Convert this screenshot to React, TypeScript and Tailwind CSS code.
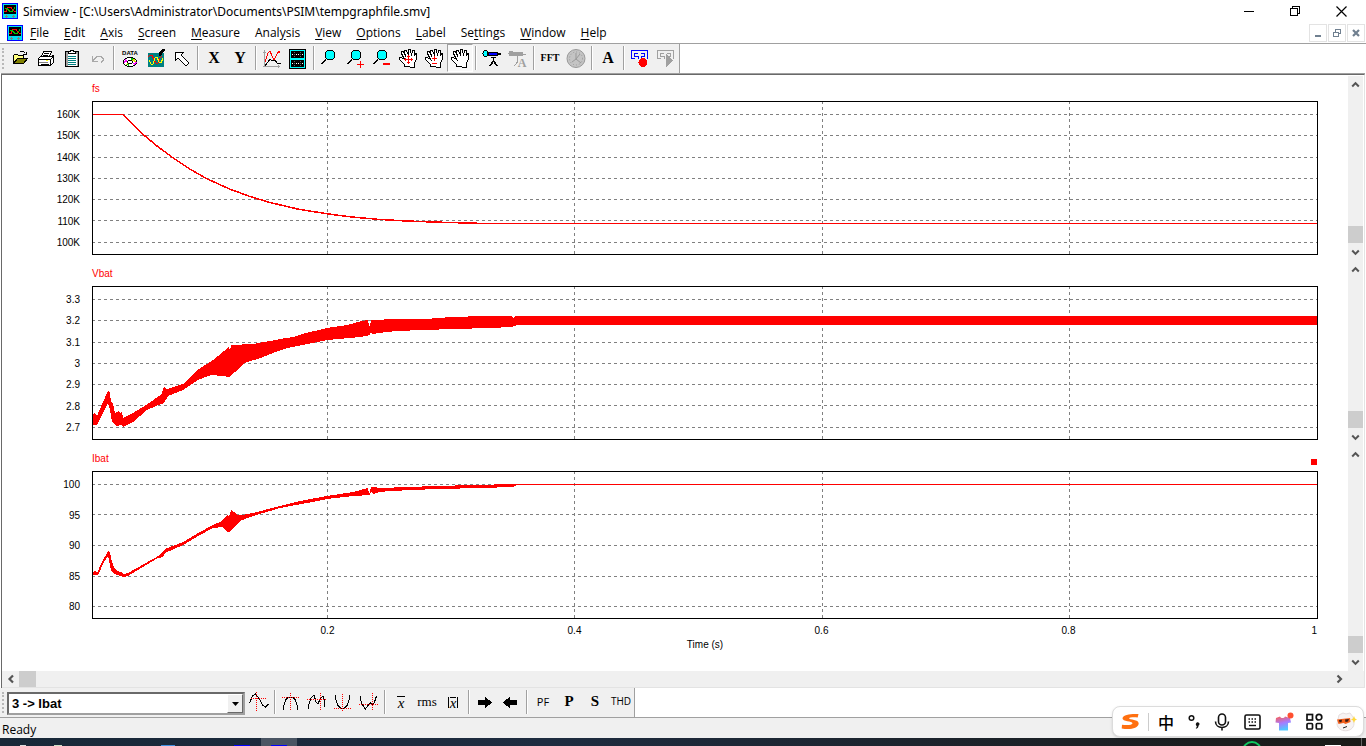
import type { ReactNode } from "react";

type Pt = [number, number];

const PLOT_LEFT = 92;
const PLOT_W = 1226;
const V_LINES = [327, 574, 822, 1069];

const fsCurve: Pt[] = [
  [92, 114], [123, 114], [142, 133], [157, 145.5], [173, 157.3], [190, 168.6], [207, 178.3], [230, 188.7],
  [250, 196], [270, 202], [298, 208.6], [327, 213.3], [352, 216.5], [380, 219], [405, 220.4], [430, 221.4],
  [460, 222.3], [487, 223],
];

const vbatShape: Pt[] = [
  [92, 414], [95, 413], [97, 416], [102, 404], [108, 391], [110, 393], [111, 402], [113, 404], [115, 413],
  [117, 412], [119, 411], [120, 413], [122, 412], [123, 418], [133, 413], [146, 405], [162, 394], [163, 388],
  [164, 387], [167, 389], [183, 384], [199, 369], [213, 360], [229, 347], [230, 351], [231, 345], [253, 344],
  [270, 341], [280, 339], [293, 337], [302, 334], [327, 328], [347, 325], [362, 321], [368, 320], [369, 326],
  [370, 326], [371, 320], [397, 319], [430, 319], [433, 318], [457, 317], [478, 316], [512, 316], [513, 318],
  [516, 316], [1317, 316], [1317, 325], [517, 325], [512, 327], [490, 328], [454, 329], [423, 330], [397, 331],
  [387, 332], [372, 334], [371, 331], [370, 335], [360, 337], [327, 340], [303, 345], [287, 348], [273, 353],
  [263, 357], [245, 363], [235, 372], [229, 377], [223, 376], [211, 375], [198, 380], [183, 390], [168, 396],
  [164, 403], [161, 404], [147, 410], [133, 422], [123, 427], [121, 425], [117, 426], [112, 422], [110, 410],
  [108, 403], [102, 415], [97, 425], [92, 425],
];

const ibatShape: Pt[] = [
  [92, 572], [95, 571], [97, 573], [101, 564], [108, 551], [110, 552], [111, 558], [114, 568], [117, 571],
  [121, 572], [123, 574], [128, 573], [160, 555], [163, 551], [165, 549], [183, 542], [200, 532], [213, 525],
  [222, 521], [228, 514], [229, 517], [231, 510], [234, 512], [237, 515], [242, 515], [253, 513], [280, 506],
  [300, 501], [327, 496], [340, 494], [353, 492], [368, 488], [369, 493], [370, 492], [371, 487], [374, 487],
  [380, 488], [407, 487], [437, 486], [472, 485], [517, 484], [1317, 484], [1317, 485], [517, 485], [513, 487],
  [482, 488], [437, 489], [390, 491], [380, 492], [373, 494], [371, 492], [370, 495], [353, 496], [327, 499],
  [307, 503], [280, 508], [253, 516], [240, 521], [230, 532], [228, 532], [222, 527], [213, 528], [200, 535],
  [183, 545], [165, 553], [163, 557], [158, 558], [128, 576], [123, 577], [120, 576], [114, 574], [111, 570],
  [108, 556], [104, 562], [98, 575], [92, 575],
];

const toPoints = (pts: Pt[], top: number) => pts.map(([x, y]) => `${x - PLOT_LEFT},${y - top}`).join(" ");

interface PanelProps {
  title: string;
  top: number;
  height: number;
  ticks: string[];
  lines: number[];
  children: ReactNode;
  selected?: boolean;
  axis?: boolean;
}

function Arrow({ dir }: { dir: "up" | "down" | "left" | "right" }) {
  const d = {
    up: "M4.500 9.500 8 6l3.500 3.500",
    down: "M4.500 6.500 8 10l3.500-3.500",
    left: "M10 4.500 6.500 8l3.500 3.500",
    right: "M6.500 4.500 10 8l-3.500 3.500",
  }[dir];
  return (
    <svg className="h-4 w-4" viewBox="0 0 16 16" aria-hidden="true">
      <path d={d} fill="none" stroke="#555" strokeWidth="2.2" />
    </svg>
  );
}

function VScroll() {
  return (
    <div className="flex w-[15px] shrink-0 flex-col items-center bg-[#f0f0f0]">
      <button aria-label="Scroll up" className="flex h-[17px] w-full items-center justify-center">
        <Arrow dir="up" />
      </button>
      <div className="flex-1" />
      <div className="h-[17px] w-full bg-[#cdcdcd]" />
      <button aria-label="Scroll down" className="flex h-[18px] w-full items-center justify-center">
        <Arrow dir="down" />
      </button>
    </div>
  );
}

function Panel({ title, top, height, ticks, lines, children, selected, axis }: PanelProps) {
  return (
    <section className={axis ? "flex flex-1" : "flex"}>
      <div className="flex w-[90px] shrink-0 flex-col pt-[25px] pr-3">
        <div className={`flex flex-col justify-between pt-2 pb-1.5 text-right leading-3 ${axis ? "h-[148px]" : "h-[154px]"}`}>
          {ticks.map((t) => (
            <span key={t}>{t}</span>
          ))}
        </div>
      </div>
      <div className={axis ? "min-w-0 flex-1" : "min-w-0 flex-1 pb-1.5"}>
        <div className="flex h-[25px] justify-between leading-[25px] text-[#ff0000]">
          <h2>{title}</h2>
          {selected && <span className="mr-px mb-1.5 h-1.5 w-1.5 self-end bg-[#ff0000]" />}
        </div>
        <svg
          className={`block w-full ${axis ? "h-[148px]" : "h-[154px]"}`}
          viewBox={`0 0 ${PLOT_W} ${height}`}
          preserveAspectRatio="none"
          shapeRendering="crispEdges"
          role="img"
          aria-label={title}
        >
          <g stroke="#808080" strokeDasharray="3 3">
            {lines.map((y) => (
              <line key={y} x1="0" x2={PLOT_W} y1={y - top + 0.5} y2={y - top + 0.5} />
            ))}
            {V_LINES.map((x) => (
              <line key={x} y1="0" y2={height} x1={x - PLOT_LEFT + 0.5} x2={x - PLOT_LEFT + 0.5} />
            ))}
          </g>
          {children}
          <rect x="0.5" y="0.5" width={PLOT_W - 1} height={height - 1} fill="none" stroke="#000" />
        </svg>
        {axis && (
          <div className="pt-[5px] text-center leading-[14px]">
            <div className="grid grid-cols-[112fr_247fr_247fr_247fr_247fr_126fr]">
              <span />
              <span>0.2</span>
              <span>0.4</span>
              <span>0.6</span>
              <span>0.8</span>
              <span className="pr-px text-right">1</span>
            </div>
            <div>Time (s)</div>
          </div>
        )}
      </div>
      <div className="w-[30px] shrink-0" />
      <VScroll />
    </section>
  );
}

function AppIcon() {
  return (
    <svg className="h-4 w-4 shrink-0" viewBox="0 0 16 16" shapeRendering="crispEdges" aria-hidden="true">
      <rect width="16" height="16" fill="#0000ff" />
      <rect x="1" y="1" width="14" height="14" fill="#00e0f0" />
      <rect x="2" y="2" width="12" height="9" fill="#000" />
      <path d="M2 8.500h2l2-4h3l2 3 2 1h1" fill="none" stroke="#ff0000" />
      <path d="M3 5.500h2l3 3h2l3-4" fill="none" stroke="#00c000" />
      <path d="M3 13.500h3M4.500 12v3M10 13.500h3M11.500 12v3" stroke="#808080" />
    </svg>
  );
}

function Ico({ children, crisp = true }: { children: ReactNode; crisp?: boolean }) {
  return (
    <svg className="h-7 w-[26px] shrink-0" viewBox="0 0 26 28" fill="none" stroke="#000" shapeRendering={crisp ? "crispEdges" : "auto"} aria-hidden="true">
      {children}
    </svg>
  );
}

function Tool({ label, children, pressed }: { label: string; children: ReactNode; pressed?: boolean }) {
  return (
    <button
      aria-label={label}
      className={`flex h-7 w-[26px] shrink-0 items-center justify-center ${
        pressed ? "border border-t-[#a0a0a0] border-r-white border-b-white border-l-[#a0a0a0] bg-[#f8f8f8]" : ""
      }`}
    >
      {children}
    </button>
  );
}

function Sep() {
  return (
    <div className="flex h-7 w-1.5 shrink-0 justify-center py-0.5">
      <div className="w-0.5 border-r border-l border-r-white border-l-[#a0a0a0]" />
    </div>
  );
}

function Grip() {
  return <div className="mx-0.5 my-1 w-[3px] shrink-0 border-l-2 border-dotted border-[#b8b8b8]" />;
}

function Lens() {
  return (
    <>
      <path d="M9 15.500 4.500 20" strokeWidth="2" />
      <circle cx="13" cy="11" r="5" fill="#00ffff" />
    </>
  );
}

function Hand() {
  return (
    <path
      d="M9.500 22.500v-2l-5-5v-2h2l3 2-3-6v-2h2l2 5-1-5v-1h2l2 5v-6h2l1 6 1-5h2v5l1-2h1v5l-2 5v4z"
      fill="#fff"
    />
  );
}

function Recorder({ color }: { color: string }) {
  return <path d="M4.500 15v-8.500h16v8.500M4 14.500h4M11 9.500h-3.500v3h3.500M14 9.500h3.500v3h-3.500M11 12v3M14 12v3" stroke={color} />;
}

function MainToolbar() {
  return (
    <div className="flex bg-white">
      <div className="flex h-[29px] border-r border-[#a0a0a0] bg-[#f0f0f0]" role="toolbar" aria-label="Main">
        <Grip />
        <Tool label="Open">
          <Ico>
            <path d="M6.500 19.500v-8l1-1h3l1 1h5v3" fill="#ffff80" />
            <path d="M6.500 19.500l4-5h10l-4 5z" fill="#808000" />
            <path d="M12.500 8.500l1-1h3l2 2M16 10.500h3.500v-3" />
          </Ico>
        </Tool>
        <Tool label="Print">
          <Ico>
            <path d="M8.500 12.500l2-5h8l-2 5" fill="#fff" />
            <path d="M11 9.500h5M10 11.500h5" />
            <path d="M5.500 14.500l2-2h11l2-1v7l-3 3h-12z" fill="#fff" />
            <path d="M5.500 15.500h12v6M17.500 15.500l3-3" />
            <path d="M6 18.500h9" stroke="#808080" />
            <rect x="13" y="16" width="2" height="1" fill="#ffff00" stroke="none" />
            <path d="M8 20.500h8" />
          </Ico>
        </Tool>
        <Tool label="Copy">
          <Ico>
            <rect x="6.500" y="7.500" width="13" height="15" fill="#a0a0a0" />
            <rect x="8.500" y="9.500" width="9" height="12" fill="#fff" stroke="none" />
            <path d="M9 12.500h8M9 14.500h8M9 16.500h8M9 18.500h8M9 20.500h8" stroke="#008080" />
            <path d="M9.500 9.500v-2h2v-1h3v1h2v2z" fill="#fff" />
          </Ico>
        </Tool>
        <Tool label="Undo">
          <Ico>
            <path d="M7.500 12v5.500h5M8 16.500l4-4h4l2 2v2l-2 2" stroke="#a8a8a8" />
          </Ico>
        </Tool>
        <Sep />
        <Tool label="Data">
          <Ico>
            <text x="13" y="11" fontSize="6" fontWeight="bold" textAnchor="middle" fill="#000" stroke="none" fontFamily="Liberation Sans, sans-serif">
              DATA
            </text>
            <ellipse cx="13" cy="18" rx="7" ry="4.500" fill="#fff" />
            <path d="M8 15l3 2.500-4 1.500zM18 21l-3-2 5-1z" fill="#ff00ff" stroke="none" />
            <path d="M17 14.500l-2 2.500 4 1zM8 21l3-2.500 1 3z" fill="#e0e000" stroke="none" />
            <path d="M14 14l0 3 3-2zM12 22v-3l-3 2z" fill="#00c000" stroke="none" />
            <ellipse cx="13" cy="18" rx="2.500" ry="1.500" fill="#fff" />
          </Ico>
        </Tool>
        <Tool label="Colors">
          <Ico>
            <rect x="5" y="9" width="16" height="14" fill="#008080" stroke="none" />
            <path d="M5 13l2-2h2l2 5 2 3h2l2-5 2-2" stroke="#ff0000" />
            <path d="M6 16l2 4h2l2-6 2-1 2 5 2 1 2-5" stroke="#ffff00" />
            <path d="M21.500 5l-5 7M20.500 5l-4 5" strokeWidth="2" />
          </Ico>
        </Tool>
        <Tool label="Select">
          <Ico>
            <path d="M6.500 8.500h8l-2.500 2.500 8 8-3 3-8-8-2.500 2.500z" fill="#fff" />
          </Ico>
        </Tool>
        <Sep />
        <Tool label="X axis">
          <span className="font-['Liberation_Serif',serif] text-base font-bold">X</span>
        </Tool>
        <Tool label="Y axis">
          <span className="font-['Liberation_Serif',serif] text-base font-bold">Y</span>
        </Tool>
        <Sep />
        <Tool label="Add curves">
          <Ico>
            <path d="M5.500 23V6M4 8.500h3M4 22.500h17M19.500 21v3" stroke="#a0a0a0" />
            <path d="M6 18l3-9 2-2 2 5 2 4 2-4 3-5 1 2" stroke="#ff0000" />
            <path d="M6 22l3-4 2-3 2 2 3-1 2 3h4" />
          </Ico>
        </Tool>
        <Tool label="Add screen">
          <Ico>
            <rect x="4" y="5" width="17" height="20" fill="#000" stroke="none" />
            <rect x="5.500" y="6.500" width="14" height="8" stroke="#00ffff" />
            <rect x="5.500" y="15.500" width="14" height="8" stroke="#00ffff" />
            <path d="M7 10.500h11M7 19.500h11" stroke="#fff" strokeDasharray="1 1" shapeRendering="auto" />
            <path d="M9.500 8v5M15.500 8v5M9.500 17v5M15.500 17v5" stroke="#606060" strokeDasharray="1 1" shapeRendering="auto" />
          </Ico>
        </Tool>
        <Sep />
        <Tool label="Zoom">
          <Ico>
            <Lens />
          </Ico>
        </Tool>
        <Tool label="Zoom in">
          <Ico>
            <Lens />
            <path d="M14 20.500h7M17.500 17v7" stroke="#ff0000" />
          </Ico>
        </Tool>
        <Tool label="Zoom out">
          <Ico>
            <Lens />
            <path d="M14 20h7" stroke="#ff0000" strokeWidth="2" />
          </Ico>
        </Tool>
        <Tool label="Pan all">
          <Ico>
            <Hand />
            <path d="M9 15.500h9M13.500 11v9M10.500 14v3M16.500 14v3M12 12.500h3M12 18.500h3" stroke="#ff0000" />
          </Ico>
        </Tool>
        <Tool label="Pan vertical">
          <Ico>
            <Hand />
            <path d="M13.500 12v5M11 14.500h5M11 19.500h5" stroke="#ff0000" />
          </Ico>
        </Tool>
        <Tool label="Pan" pressed>
          <Ico>
            <Hand />
          </Ico>
        </Tool>
        <Sep />
        <Tool label="Measure">
          <Ico>
            <path d="M14.500 14v4M14.500 17l-4 5.500M14.500 17l4 5.500" strokeWidth="1.500" />
            <rect x="9.500" y="8.500" width="9" height="3" fill="#0000ff" />
            <rect x="18" y="9" width="4" height="2" fill="#000" stroke="none" />
            <ellipse cx="6.500" cy="9.500" rx="2.500" ry="3" fill="#00ffff" />
            <path d="M12 13.500h5" />
          </Ico>
        </Tool>
        <Tool label="Measure text">
          <Ico>
            <g stroke="#a0a0a0" fill="#a0a0a0">
              <path d="M12.500 12v6l-3 4" fill="none" />
              <rect x="7.500" y="8.500" width="10" height="3" />
              <path d="M17 10.500h4" />
              <ellipse cx="6" cy="9.500" rx="2" ry="2.500" />
            </g>
            <text x="17" y="23" fontSize="12" fontWeight="bold" textAnchor="middle" fill="#a0a0a0" stroke="none" fontFamily="Liberation Serif, serif">
              A
            </text>
          </Ico>
        </Tool>
        <Sep />
        <Tool label="FFT">
          <span className="font-['Liberation_Serif',serif] text-[10px] font-bold">FFT</span>
        </Tool>
        <Tool label="Time">
          <Ico crisp={false}>
            <circle cx="13" cy="14.500" r="9" fill="#c4c4c4" stroke="#999" />
            <circle cx="13" cy="14.500" r="6.500" stroke="#999" strokeDasharray="1 2" />
            <path d="M13 9v6l-4 3M17 10l-4 5 5 4" stroke="#999" />
          </Ico>
        </Tool>
        <Sep />
        <Tool label="Text">
          <span className="font-['Liberation_Serif',serif] text-base font-bold">A</span>
        </Tool>
        <Sep />
        <Tool label="Record">
          <Ico>
            <Recorder color="#0000ff" />
            <circle cx="16" cy="18.500" r="4.500" fill="#ff0000" stroke="none" />
          </Ico>
        </Tool>
        <Tool label="Play">
          <Ico>
            <Recorder color="#a0a0a0" />
            <path d="M13 10v13l7-6.500z" fill="#a0a0a0" stroke="none" />
          </Ico>
        </Tool>
      </div>
    </div>
  );
}

function Wave({ curve, guide }: { curve: string; guide: string }) {
  return (
    <Ico>
      <path d={curve} />
      <path d={guide} stroke="#ff0000" strokeDasharray="1 1" shapeRendering="auto" />
    </Ico>
  );
}

function MeasureToolbar() {
  const serif = "font-['Liberation_Serif',serif]";
  return (
    <div className="flex border-b border-[#a0a0a0] bg-white">
      <div className="flex h-[29px] border-r border-[#a0a0a0] bg-[#f0f0f0]" role="toolbar" aria-label="Measurements">
        <Grip />
        <div className="mt-1 mr-px mb-0.5 grid w-[238px] border-2 border-t-[#696969] border-r-[#a0a0a0] border-b-[#a0a0a0] border-l-[#696969] bg-white">
          <select
            aria-label="Curve"
            className="col-start-1 row-start-1 appearance-none bg-transparent pl-[3px] font-['Liberation_Sans',sans-serif] text-[13px] leading-4 font-bold"
          >
            <option>3 -&gt; Ibat</option>
          </select>
          <span className="pointer-events-none col-start-1 row-start-1 flex w-4 items-center justify-center justify-self-end border border-t-white border-r-[#696969] border-b-[#696969] border-l-white bg-[#f0f0f0]">
            <svg className="h-1 w-[7px]" viewBox="0 0 7 4" aria-hidden="true">
              <path d="M0 0h7L3.500 4z" />
            </svg>
          </span>
        </div>
        <Tool label="Next zero crossing">
          <Wave curve="M3.500 15l3-7 3-2 4 5 3 6 3 2 3-3" guide="M5 10.500h16M10.500 4v20" />
        </Tool>
        <Sep />
        <Tool label="Global maximum">
          <Wave curve="M5.500 22v-3l2-7 3-3h4l3 3 2 7v3" guide="M4 9.500h18M12.500 5v18" />
        </Tool>
        <Tool label="Next maximum">
          <Wave curve="M4 21l1-5 2-6 3-3 2 7 2 2 2-5 3-3 1 3 1 8" guide="M3 11.500h19M16.500 5v18" />
        </Tool>
        <Tool label="Global minimum">
          <Wave curve="M5.500 7v3l2 7 3 3h4l3-3 2-7v-3" guide="M4 20.500h18M12.500 6v18" />
        </Tool>
        <Tool label="Next minimum">
          <Wave curve="M4.500 8v4l2 5 3 4 3-4 2-2 2 2 2-3 2-6" guide="M3 16.500h19M16.500 5v18" />
        </Tool>
        <Sep />
        <Tool label="Average">
          <span className={`${serif} border-t border-black px-px text-[15px] leading-3 italic`}>x</span>
        </Tool>
        <Tool label="RMS">
          <span className={`${serif} text-[13px]`}>rms</span>
        </Tool>
        <Tool label="Average absolute">
          <span className="border-x border-black px-px">
            <span className={`${serif} block border-t border-black text-[15px] leading-[10px] italic`}>x</span>
          </span>
        </Tool>
        <Sep />
        <Tool label="Next point">
          <Ico>
            <path d="M6 12h7V8.500l7 6-7 6V17H6z" fill="#000" stroke="none" />
          </Ico>
        </Tool>
        <Tool label="Previous point">
          <Ico>
            <path d="M19 12h-7V8.500l-7 6 7 6V17h7z" fill="#000" stroke="none" />
          </Ico>
        </Tool>
        <Sep />
        <Tool label="Power factor">
          <span className="text-[11px]">PF</span>
        </Tool>
        <Tool label="Real power">
          <span className={`${serif} text-[15px] font-bold`}>P</span>
        </Tool>
        <Tool label="Apparent power">
          <span className={`${serif} text-[15px] font-bold`}>S</span>
        </Tool>
        <Tool label="Total harmonic distortion">
          <span className="text-[10px]">THD</span>
        </Tool>
      </div>
    </div>
  );
}

const menus: [string, string, string][] = [
  ["", "F", "ile"], ["", "E", "dit"], ["", "A", "xis"], ["", "S", "creen"], ["", "M", "easure"], ["Anal", "y", "sis"],
  ["", "V", "iew"], ["", "O", "ptions"], ["", "L", "abel"], ["Se", "t", "tings"], ["", "W", "indow"], ["", "H", "elp"],
];

function ImeBar() {
  return (
    <div className="absolute right-0.5 bottom-[9px] flex h-[31px] w-[252px] items-center rounded-lg border border-[#dcdcdc] bg-white pl-2 shadow-sm">
      <button aria-label="Input method" className="w-[19px]">
        <svg className="h-[18px] w-[19px]" viewBox="0 0 19 18" aria-hidden="true">
          <path d="M17.500 1C11 .6 2 1.200 1.500 5.300c-.3 3.300 10 2.900 10 4.900 0 1.800-5 2.200-10.500 1.600l-.3 3.600c7 1.600 16.500.6 17-4.900.3-4.500-9.500-3.600-9.500-5.100 0-1 4-1.300 8.500-.9z" fill="#ff7010" />
        </svg>
      </button>
      <span className="mr-[3px] ml-2 h-[18px] w-px bg-[#ccc]" />
      <button className="w-7 text-center font-['Noto_Sans_CJK_SC',sans-serif] text-base leading-5 font-medium">中</button>
      <button aria-label="Punctuation" className="flex w-7 justify-center">
        <svg className="h-4 w-3" viewBox="0 0 12 16" aria-hidden="true">
          <circle cx="3.500" cy="4" r="2.300" fill="none" stroke="#111" strokeWidth="1.500" />
          <path d="M8 9.500a1.800 1.800 0 1 1 2.500 2.200c0 1.500-.8 2.500-2.300 3l-.5-.8c.8-.4 1.100-.9 1.100-1.700C8 11.800 7.500 10.500 8 9.500z" fill="#111" />
        </svg>
      </button>
      <button aria-label="Voice" className="flex w-7 justify-center">
        <svg className="h-[18px] w-4" viewBox="0 0 16 18" fill="none" stroke="#111" strokeWidth="1.600" aria-hidden="true">
          <rect x="4.500" y="1" width="7" height="11" rx="3.500" />
          <path d="M1.500 8.500c0 8 13 8 13 0M8 14.500v3" />
        </svg>
      </button>
      <button aria-label="Keyboard" className="ml-px flex w-[31px] justify-center">
        <svg className="h-4 w-[17px]" viewBox="0 0 17 16" fill="none" stroke="#111" aria-hidden="true">
          <rect x="1" y="1" width="15" height="14" rx="1.500" strokeWidth="1.600" />
          <path d="M4.500 5h8M4.500 8h8" strokeWidth="1.500" strokeDasharray="1.500 1.500" />
          <path d="M5 11.500h7" strokeWidth="1.400" />
        </svg>
      </button>
      <button aria-label="Skin" className="flex w-[31px] justify-center">
        <svg className="h-[20px] w-[20px]" viewBox="0 0 20 20" aria-hidden="true">
          <defs>
            <linearGradient id="shirt" x1="0" y1="0" x2="0.300" y2="1">
              <stop offset="0" stopColor="#ff5b4a" />
              <stop offset="0.550" stopColor="#a77bff" />
              <stop offset="1" stopColor="#50c8ff" />
            </linearGradient>
          </defs>
          <path d="M2 6l4-1.500c1 2 4 2 5 0L16 6l1 4.500-3 .5v7.500H5V11l-3.500-.5z" fill="url(#shirt)" />
          <circle cx="16.500" cy="3.500" r="3" fill="#ff5030" />
        </svg>
      </button>
      <button aria-label="Toolbox" className="flex w-[31px] justify-center">
        <svg className="h-[17px] w-[17px]" viewBox="0 0 17 17" fill="none" stroke="#111" strokeWidth="1.700" aria-hidden="true">
          <rect x="1" y="1.500" width="5.500" height="5.500" />
          <circle cx="13" cy="4.200" r="2.800" />
          <rect x="1" y="10.500" width="5.500" height="5.500" rx="1" />
          <rect x="10.300" y="10.500" width="5.500" height="5.500" rx="1" />
        </svg>
      </button>
      <button aria-label="Assistant" className="flex w-[31px] justify-center">
        <svg className="h-[22px] w-[22px]" viewBox="0 0 22 22" aria-hidden="true">
          <path d="M4 4l4-2 3 1 4-1 3 4 1 7c-1 9-16 9-17 0z" fill="#f7f3f3" stroke="#e6dede" />
          <path d="M2 8.500L15 7l.5 4-5 2-2-1-5 1z" fill="#f4601c" />
          <path d="M4 9l3-.3-.5 2.500H4.500zM10 8.500l4-.5-1 2.500-2.500.5z" fill="#3a1a12" />
          <path d="M8 17l4-1.500" stroke="#222" />
          <path d="M19 5l1 2.500 2 1-2 1L19 12l-1-2.500-2-1 2-1z" fill="#ffd83a" />
        </svg>
      </button>
    </div>
  );
}

export default function App() {
  return (
    <div className="relative flex min-h-screen flex-col bg-white font-['Open_Sans',sans-serif] text-xs text-black">
      <header>
        <div className="flex h-[22px] items-center pl-0.5">
          <AppIcon />
          <h1 className="ml-[5px] flex-1 pt-0.5 font-['Noto_Sans',sans-serif] leading-5">
            Simview - [C:\Users\Administrator\Documents\PSIM\tempgraphfile.smv]
          </h1>
          <div className="flex pr-0.5">
            <button aria-label="Minimize" className="flex h-5 w-[46px] items-center justify-center">
              <svg className="h-[11px] w-[11px]" viewBox="0 0 11 11" shapeRendering="crispEdges" aria-hidden="true">
                <path d="M0 5.500h10" stroke="#000" />
              </svg>
            </button>
            <button aria-label="Restore" className="flex h-5 w-[46px] items-center justify-center">
              <svg className="h-[11px] w-[11px]" viewBox="0 0 11 11" fill="none" stroke="#000" shapeRendering="crispEdges" aria-hidden="true">
                <path d="M.5 2.500h7v7h-7zM2.500 2.500v-2h7v7h-2" />
              </svg>
            </button>
            <button aria-label="Close" className="flex h-5 w-[46px] items-center justify-center">
              <svg className="h-[11px] w-[11px]" viewBox="0 0 11 11" aria-hidden="true">
                <path d="M.5.5l10 10M10.500.5l-10 10" stroke="#000" strokeWidth="1.200" />
              </svg>
            </button>
          </div>
        </div>
        <div className="flex h-[22px] items-center border-b border-[#a0a0a0] pl-[7px]">
          <AppIcon />
          <nav className="flex flex-1 gap-[15px] pl-[7px] leading-5">
            {menus.map(([a, b, c]) => (
              <button key={a + b + c} className="flex">
                {a}
                <u className="underline-offset-2">{b}</u>
                {c}
              </button>
            ))}
          </nav>
          <div className="flex gap-px pr-px">
            <button aria-label="Minimize document" className="flex h-[18px] w-[18px] items-center justify-center border border-[#e3e3e3]">
              <svg className="h-3 w-3" viewBox="0 0 12 12" aria-hidden="true">
                <path d="M3 9h6" stroke="#708090" strokeWidth="2" />
              </svg>
            </button>
            <button aria-label="Restore document" className="flex h-[18px] w-[18px] items-center justify-center border border-[#e3e3e3]">
              <svg className="h-3 w-3" viewBox="0 0 12 12" fill="none" stroke="#708090" shapeRendering="crispEdges" aria-hidden="true">
                <path d="M2.500 5.500h5v4h-5zM4.500 5V2.500h5v4H8M2 5h6M4 2h6" />
              </svg>
            </button>
            <button aria-label="Close document" className="flex h-[18px] w-[18px] items-center justify-center border border-[#e3e3e3]">
              <svg className="h-3 w-3" viewBox="0 0 12 12" aria-hidden="true">
                <path d="M3 3l6 6M9 3L3 9" stroke="#708090" strokeWidth="2.200" />
              </svg>
            </button>
          </div>
        </div>
      </header>

      <MainToolbar />

      <main className="mr-px ml-px flex flex-1 flex-col border-t border-[#a0a0a0]">
        <div className="flex flex-1 flex-col border-t border-r border-l border-t-[#696969] border-r-[#e3e3e3] border-l-[#696969] pt-px font-['Liberation_Sans',sans-serif] text-[10px]">
          <div className="flex flex-1 flex-col pr-px">
            <Panel
              title="fs"
              top={101}
              height={154}
              ticks={["160K", "150K", "140K", "130K", "120K", "110K", "100K"]}
              lines={[114, 135, 157, 178, 199, 220, 242]}
            >
              <polyline points={toPoints(fsCurve, 100.5)} fill="none" stroke="#ff0000" strokeWidth="1.500" />
              <path d="M395 122.500H1225" stroke="#ff0000" />
            </Panel>
            <Panel
              title="Vbat"
              top={286}
              height={154}
              ticks={["3.3", "3.2", "3.1", "3", "2.9", "2.8", "2.7"]}
              lines={[299, 320, 342, 363, 384, 405, 427]}
            >
              <polygon points={toPoints(vbatShape, 286)} fill="#ff0000" />
            </Panel>
            <Panel
              title="Ibat"
              top={471}
              height={148}
              ticks={["100", "95", "90", "85", "80"]}
              lines={[484, 514, 545, 576, 606]}
              selected
              axis
            >
              <polygon points={toPoints(ibatShape, 471)} fill="#ff0000" />
            </Panel>
          </div>
          <div className="flex h-[17px] items-center border-b border-[#e3e3e3] bg-[#f0f0f0] pr-[17px]">
            <button aria-label="Scroll left" className="flex h-4 w-[17px] items-center justify-center">
              <Arrow dir="left" />
            </button>
            <div className="h-4 w-[17px] bg-[#cdcdcd]" />
            <div className="flex-1" />
            <button aria-label="Scroll right" className="flex h-4 w-[17px] items-center justify-center">
              <Arrow dir="right" />
            </button>
          </div>
        </div>
      </main>

      <MeasureToolbar />

      <footer>
        <div className="h-5 bg-[#f0f0f0] pt-0.5 pl-0.5 leading-5">Ready</div>
        <svg className="block h-2 w-full bg-linear-to-r from-[#182838] via-[#1e2c40] via-40% to-[#191a17]" aria-hidden="true">
          <rect x="261" width="36" height="8" fill="#4a5563" />
          <rect x="271" y="7" width="16" height="1" fill="#0000ff" />
          <rect x="234" y="7" width="16" height="1" fill="#0000ff" />
          <rect x="161" y="7" width="14" height="1" fill="#3f8fe0" />
          <rect x="20" y="7" width="6" height="1" fill="#ddd" />
          <rect x="54" y="7" width="8" height="1" fill="#cde0c8" />
          <circle cx="1252" cy="13" r="9" fill="none" stroke="#10c860" strokeWidth="2" />
          <rect x="1325" y="7" width="16" height="1" fill="#fff" />
          <rect x="1361" width="1" height="8" fill="#666" />
        </svg>
      </footer>
      <ImeBar />
    </div>
  );
}
